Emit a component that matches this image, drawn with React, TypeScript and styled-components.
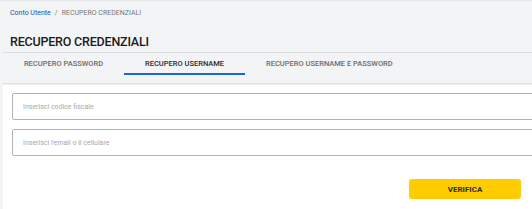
import React from 'react'
import styled, { createGlobalStyle } from 'styled-components'

const GlobalStyle = createGlobalStyle`
    html, body {
        margin: 0;
        padding: 0;
        background: #f3f4f6;
        overflow: hidden;
    }
    body {
        font-family: Roboto, 'Liberation Sans', Arial, sans-serif;
    }
`

const tabs = ['RECUPERO PASSWORD', 'RECUPERO USERNAME', 'RECUPERO USERNAME E PASSWORD']

export default function App() {
    return (
        <Page>
            <GlobalStyle />
            <TopShade />
            <Breadcrumb>
                <Crumb href="#">Conto Utente</Crumb>
                <Sep>/</Sep>
                <Current>RECUPERO CREDENZIALI</Current>
            </Breadcrumb>
            <Title>RECUPERO CREDENZIALI</Title>
            <TabBar>
                {tabs.map((t, i) => (
                    <Tab key={t} $active={i === 1}>
                        {t}
                    </Tab>
                ))}
            </TabBar>
            <Panel>
                <Field placeholder="Inserisci codice fiscale" />
                <Field placeholder="Inserisci l'email o il cellulare" />
                <Actions>
                    <Button>VERIFICA</Button>
                </Actions>
            </Panel>
        </Page>
    )
}

const Page = styled.div`
    width: 560px;
    height: 209px;
    overflow: hidden;
`

const TopShade = styled.div`
    height: 2px;
    background: linear-gradient(#e2e3e6, #f3f4f6);
`

const Breadcrumb = styled.nav`
    display: flex;
    align-items: center;
    gap: 4px;
    padding: 4px 0 0 10px;
    height: 14px;
    font-size: 7px;
`

const Crumb = styled.a`
    color: #1f4e9c;
    text-decoration: none;
`

const Sep = styled.span`
    color: #888;
`

const Current = styled.span`
    color: #777;
`

const Title = styled.h1`
    margin: 0;
    padding: 14px 0 0 10px;
    height: 15px;
    font-size: 12.5px;
    font-weight: 500;
    line-height: 15px;
    color: #1b1b1b;
    letter-spacing: -0.2px;
`

const TabBar = styled.div`
    display: flex;
    margin: 3px 0 0 3px;
    border-top: 1px solid #dcdde0;
    border-bottom: 1px solid #dcdde0;
    height: 30px;
`

const Tab = styled.div<{ $active?: boolean }>`
    box-sizing: border-box;
    display: flex;
    align-items: center;
    justify-content: center;
    padding: 0 21px;
    width: 121px;
    font-size: 7.5px;
    font-weight: 500;
    color: ${p => (p.$active ? '#2a2a2a' : '#6b6b6b')};
    border-bottom: 2px solid ${p => (p.$active ? '#1e66d8' : 'transparent')};
    margin-bottom: 8px;
    white-space: nowrap;
    &:last-child {
        width: auto;
    }
`

const Panel = styled.div`
    margin: 1px 0 0 3px;
    background: #fff;
    padding: 8px 0 8px 9px;
    display: flex;
    flex-direction: column;
    gap: 9px;
    height: 109px;
`

const Field = styled.input`
    box-sizing: border-box;
    height: 27px;
    width: 100%;
    border: 1px solid #b3b3b3;
    border-radius: 2px;
    padding: 0 10px;
    font-family: inherit;
    font-size: 7px;
    outline: none;
    &::placeholder {
        color: #a8a8a8;
    }
`

const Actions = styled.div`
    display: flex;
    justify-content: flex-end;
    padding: 14px 0 0 0;
`

const Button = styled.button`
    width: 112px;
    height: 20px;
    margin-right: 39px;
    border: none;
    border-radius: 3px;
    background: #ffcc00;
    color: #2b2b2b;
    font-family: inherit;
    font-weight: 700;
    font-size: 8px;
`
